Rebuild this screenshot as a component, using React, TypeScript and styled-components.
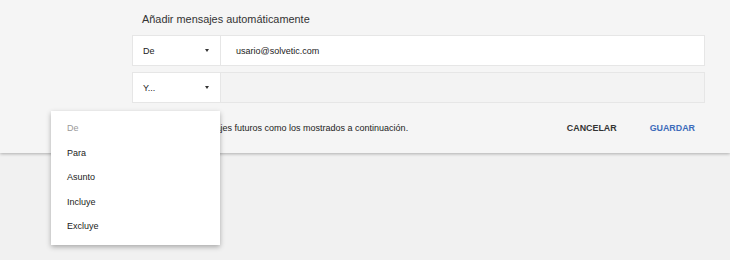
import React from "react";
import styled, { createGlobalStyle } from "styled-components";

const Global = createGlobalStyle`
  html, body { margin: 0; padding: 0; }
  body {
    background: #f1f1f1;
    font-family: "Liberation Sans", Arial, sans-serif;
    width: 730px;
    height: 260px;
    overflow: hidden;
  }
`;

const Page = styled.div`
  position: relative;
  width: 730px;
  height: 260px;
`;

const Panel = styled.div`
  height: 153px;
  background: #f5f5f5;
  box-shadow: 0 1px 3px rgba(0, 0, 0, 0.28);
  padding: 0 25px 0 132px;
  box-sizing: border-box;
  display: flex;
  flex-direction: column;
`;

const Title = styled.div`
  font-size: 10.9px;
  color: #333;
  padding: 12px 0 0 10px;
  height: 24px;
  box-sizing: border-box;
  line-height: 14px;
`;

const Rows = styled.div`
  display: flex;
  flex-direction: column;
  gap: 6px;
  margin-top: 11px;
`;

const Row = styled.div`
  display: flex;
  height: 31px;
  border: 1px solid #e6e6e6;
  box-sizing: border-box;
`;

const Select = styled.div`
  width: 88px;
  box-sizing: border-box;
  background: #fff;
  border-right: 1px solid #e6e6e6;
  display: flex;
  align-items: center;
  justify-content: space-between;
  padding: 0 11px 0 10px;
  font-size: 9px;
  color: #222;
`;

const Caret = styled.span`
  width: 0;
  height: 0;
  border-left: 2.5px solid transparent;
  border-right: 2.5px solid transparent;
  border-top: 3px solid #333;
`;

const Field = styled.div<{ $filled: boolean }>`
  flex: 1;
  background: ${(p) => (p.$filled ? "#fff" : "#f3f3f3")};
  display: flex;
  align-items: center;
  padding-left: 15px;
  font-size: 9px;
  color: #222;
`;

const Footer = styled.div`
  display: flex;
  align-items: center;
  height: 24px;
  margin-top: 13px;
  padding: 0 10px;
  font-size: 9px;
  color: #222;
`;

const Note = styled.span`
  flex: 1;
`;

const Action = styled.button<{ $primary?: boolean }>`
  border: none;
  background: none;
  padding: 0;
  margin-left: 33px;
  font-family: inherit;
  font-size: 8.9px;
  font-weight: bold;
  color: ${(p) => (p.$primary ? "#3d6cbb" : "#333")};
`;

const Menu = styled.div`
  position: absolute;
  left: 51px;
  top: 111px;
  width: 169px;
  background: #fff;
  box-shadow: 0 2px 5px rgba(0, 0, 0, 0.3);
  padding: 5px 0 6px;
  box-sizing: border-box;
`;

const Item = styled.div<{ $muted?: boolean }>`
  height: 24.5px;
  line-height: 24.5px;
  padding-left: 16px;
  font-size: 9px;
  color: ${(p) => (p.$muted ? "#9a9a9a" : "#222")};
`;

const items = ["De", "Para", "Asunto", "Incluye", "Excluye"];

export default function App() {
  return (
    <Page>
      <Global />
      <Panel>
        <Title>Añadir mensajes automáticamente</Title>
        <Rows>
          <Row>
            <Select>
              De <Caret />
            </Select>
            <Field $filled>usario@solvetic.com</Field>
          </Row>
          <Row>
            <Select>
              Y... <Caret />
            </Select>
            <Field $filled={false} />
          </Row>
        </Rows>
        <Footer>
          <Note>Aplicar a los mensajes futuros como los mostrados a continuación.</Note>
          <Action>CANCELAR</Action>
          <Action $primary>GUARDAR</Action>
        </Footer>
      </Panel>
      <Menu>
        {items.map((t, i) => (
          <Item key={t} $muted={i === 0}>
            {t}
          </Item>
        ))}
      </Menu>
    </Page>
  );
}
